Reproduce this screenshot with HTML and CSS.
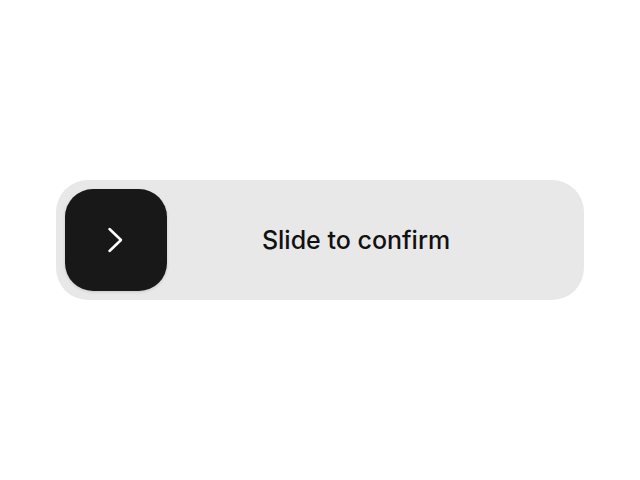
FILE: index.html
```html
<!DOCTYPE html>
<html>
<head>
<meta charset="utf-8">
<link rel="stylesheet" href="styles.css">
</head>
<body>
<div class="page">
  <div class="track">
    <div class="knob">
      <svg width="24" height="32" viewBox="0 0 24 32" fill="none">
        <path d="M5.5 5 L17 16 L5.5 27" stroke="#ffffff" stroke-width="2.5" stroke-linecap="round" stroke-linejoin="round"/>
      </svg>
    </div>
    <div class="label">Slide to confirm</div>
  </div>
</div>
</body>
</html>
```
FILE: styles.css
```css
html, body {
  margin: 0;
  padding: 0;
  background: #ffffff;
}
.page {
  width: 640px;
  height: 480px;
  display: flex;
  align-items: center;
  justify-content: center;
}
.track {
  width: 528px;
  height: 120px;
  box-sizing: border-box;
  padding: 9px;
  background: #e8e8e8;
  border-radius: 32px;
  display: flex;
  align-items: center;
}
.knob {
  width: 102px;
  height: 102px;
  border-radius: 28px;
  background: #181818;
  display: flex;
  align-items: center;
  justify-content: center;
  box-shadow: 0 1px 3px rgba(0,0,0,0.15);
  flex-shrink: 0;
}
.label {
  flex: 1;
  text-align: center;
  padding-right: 30px;
  font-family: Inter, "Noto Sans", sans-serif;
  font-size: 25px;
  font-weight: 450;
  color: #111111;
}
```
